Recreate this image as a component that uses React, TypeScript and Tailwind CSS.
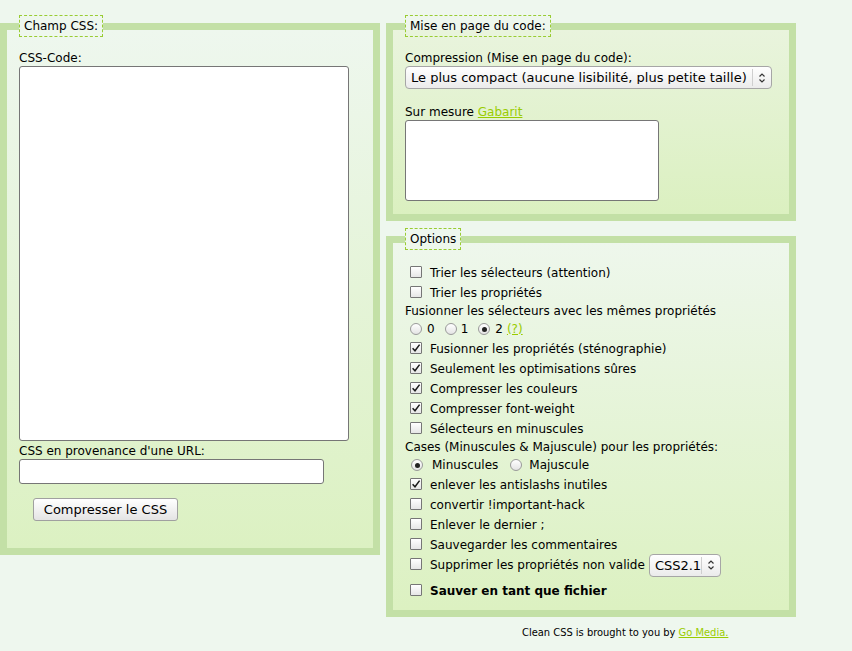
import { ReactNode } from "react";

function Check({ checked = false }: { checked?: boolean }) {
  return (
    <span className="ml-[5px] mb-[3px] flex h-[12px] w-[12px] shrink-0 items-center justify-center rounded-[1px] border border-[#767676] bg-linear-to-b from-white to-[#e6e6e6]">
      {checked && (
        <svg width="10" height="10" viewBox="0 0 10 10">
          <path d="M1.6 5.2 L4 7.8 L8.6 1.6" fill="none" stroke="#1a1a1a" strokeWidth="1.5" />
        </svg>
      )}
    </span>
  );
}

function Radio({ checked = false, className = "" }: { checked?: boolean; className?: string }) {
  return (
    <span
      className={
        "flex h-[12px] w-[12px] shrink-0 items-center justify-center rounded-full border border-[#9a9a9a] bg-linear-to-b from-white to-[#e4e4e4] " +
        className
      }
    >
      {checked && <span className="h-[5px] w-[5px] rounded-full bg-[#222]" />}
    </span>
  );
}

function Arrows() {
  return (
    <svg width="8" height="12" viewBox="0 0 8 12">
      <polyline points="1.5,4.5 4,2 6.5,4.5" fill="none" stroke="#333" strokeWidth="1.2" />
      <polyline points="1.5,7.5 4,10 6.5,7.5" fill="none" stroke="#333" strokeWidth="1.2" />
    </svg>
  );
}

function FakeSelect({ value, className }: { value: string; className: string }) {
  return (
    <div
      className={
        "flex h-[23px] shrink-0 items-center rounded-[4px] border border-[#a6a6a6] bg-linear-to-b from-white to-[#ebebeb] pl-[5px] text-[13px] " +
        className
      }
    >
      <span className="flex-1 overflow-hidden whitespace-nowrap leading-none">{value}</span>
      <span className="h-[17px] w-px bg-[#cfcfcf]" />
      <span className="flex w-[18px] justify-center">
        <Arrows />
      </span>
    </div>
  );
}

function Legend({ children }: { children: ReactNode }) {
  return (
    <legend className="border border-dashed border-[#99cc33] px-[4px] leading-[20px]">{children}</legend>
  );
}

function Option({ checked, children, className = "" }: { checked?: boolean; children: ReactNode; className?: string }) {
  return (
    <div className={"flex h-[20px] items-center " + className}>
      <Check checked={checked} />
      <span className="ml-[8px] whitespace-nowrap">{children}</span>
    </div>
  );
}

const link = "text-[#99cc00] underline";

export default function App() {
  return (
    <div className="min-h-[651px] bg-[#eef7ee] pt-[15px] font-['DejaVu_Sans',sans-serif] text-[12px] leading-[14px] text-black">
      <div className="flex items-start">
        <fieldset className="h-[540px] w-[380px] border-[7px] border-[#c3e0a6] bg-linear-to-b from-[#eef7ee] to-[#dcf1c2] px-[12px] pt-[14px]">
          <Legend>Champ CSS:</Legend>
          <label className="block">CSS-Code:</label>
          <textarea className="mt-[1px] block h-[375px] w-[330px] resize-none rounded-[3px] border border-[#767676] bg-white" />
          <label className="mt-[3px] block">CSS en provenance d'une URL:</label>
          <input className="mt-[1px] block h-[25px] w-[305px] rounded-[3px] border border-[#767676] bg-white" />
          <button className="ml-[14px] mt-[14px] block h-[23px] w-[145px] rounded-[3px] border border-[#a0a0a0] bg-linear-to-b from-white to-[#e4e4e4] text-[13px]">
            Compresser le CSS
          </button>
        </fieldset>

        <div className="ml-[6px] flex w-[410px] flex-col">
          <fieldset className="h-[206px] border-[7px] border-[#c3e0a6] bg-linear-to-b from-[#e9f4dd] to-[#dbf0c0] px-[12px] pt-[14px]">
            <Legend>Mise en page du code:</Legend>
            <label className="block">Compression (Mise en page du code):</label>
            <FakeSelect value="Le plus compact (aucune lisibilité, plus petite taille)" className="mt-[1px] w-[367px]" />
            <label className="mt-[16px] block">
              Sur mesure <a className={link}>Gabarit</a>
            </label>
            <textarea className="mt-[1px] block h-[81px] w-[254px] resize-none rounded-[3px] border border-[#767676] bg-white" />
          </fieldset>

          <fieldset className="mt-[7px] h-[389px] border-[7px] border-[#c3e0a6] bg-linear-to-b from-[#eef7ec] to-[#dcf1c1] px-[12px] pt-[13px]">
            <Legend>Options</Legend>
            <Option>Trier les sélecteurs (attention)</Option>
            <Option>Trier les propriétés</Option>
            <div className="flex h-[16px] items-center">Fusionner les sélecteurs avec les mêmes propriétés</div>
            <div className="flex h-[20px] items-center">
              <Radio className="ml-[5px]" />
              <span className="ml-[5px]">0</span>
              <Radio className="ml-[10px]" />
              <span className="ml-[4px]">1</span>
              <Radio checked className="ml-[10px]" />
              <span className="ml-[5px]">2</span>
              <a className={"ml-[4px] " + link}>(?)</a>
            </div>
            <Option checked>Fusionner les propriétés (sténographie)</Option>
            <Option checked>Seulement les optimisations sûres</Option>
            <Option checked>Compresser les couleurs</Option>
            <Option checked>Compresser font-weight</Option>
            <Option>Sélecteurs en minuscules</Option>
            <div className="flex h-[16px] items-center">Cases (Minuscules &amp; Majuscule) pour les propriétés:</div>
            <div className="flex h-[20px] items-center">
              <Radio checked className="ml-[6px]" />
              <span className="ml-[9px]">Minuscules</span>
              <Radio className="ml-[12px]" />
              <span className="ml-[7px]">Majuscule</span>
            </div>
            <Option checked>enlever les antislashs inutiles</Option>
            <Option>convertir !important-hack</Option>
            <Option>Enlever le dernier ;</Option>
            <Option>Sauvegarder les commentaires</Option>
            <div className="flex h-[20px] items-center">
              <Check />
              <span className="ml-[8px] whitespace-nowrap">Supprimer les propriétés non valide</span>
              <FakeSelect value="CSS2.1" className="ml-[4px] w-[72px]" />
            </div>
            <Option className="mt-[6px]">
              <b>Sauver en tant que fichier</b>
            </Option>
          </fieldset>

          <p className="mt-[9px] pl-[136px] font-['DejaVu_Sans_Condensed',sans-serif] text-[11px]">
            Clean CSS is brought to you by <a className={link}>Go Media.</a>
          </p>
        </div>
      </div>
    </div>
  );
}
